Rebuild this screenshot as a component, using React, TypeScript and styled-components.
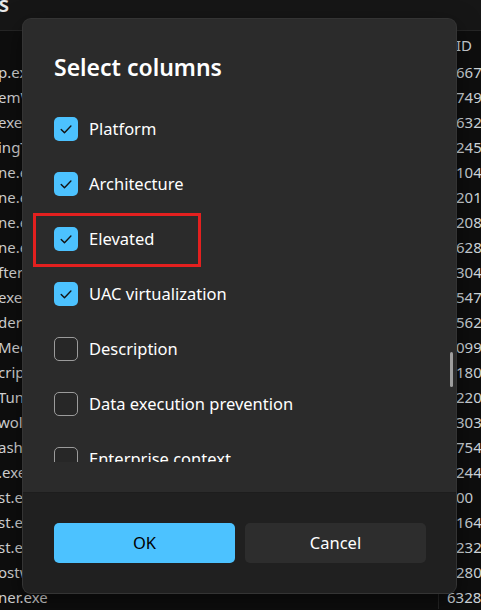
import React from 'react';
import styled, { createGlobalStyle } from 'styled-components';

const GlobalStyle = createGlobalStyle`
  html, body {
    margin: 0;
    padding: 0;
    background: #0e0e0e;
  }
  * {
    box-sizing: border-box;
  }
`;

type Proc = { name: string; id: string; shift?: boolean };

const processes: Proc[] = [
  { name: 'p.exe', id: '6674' },
  { name: 'emWatch', id: '7496' },
  { name: 'exe', id: '6320' },
  { name: 'ingTool', id: '2452' },
  { name: 'ne.exe', id: '1040' },
  { name: 'ne.exe', id: '2012' },
  { name: 'ne.exe', id: '2084' },
  { name: 'ne.exe', id: '6284' },
  { name: 'fterburner', id: '3044' },
  { name: 'exe', id: '5476' },
  { name: 'derService', id: '5624' },
  { name: 'MediaHost', id: '0992' },
  { name: 'criptHost', id: '1804' },
  { name: 'TuneSvc', id: '2206' },
  { name: 'wolfService', id: '3036' },
  { name: 'ashboard', id: '7544' },
  { name: '.exe', id: '2440' },
  { name: 'st.exe', id: '00' },
  { name: 'st.exe', id: '1640' },
  { name: 'st.exe', id: '2320' },
  { name: 'ostwin', id: '2804' },
  { name: 'ner.exe', id: '6328', shift: true },
];

type Column = { label: string; checked: boolean };

const columns: Column[] = [
  { label: 'Platform', checked: true },
  { label: 'Architecture', checked: true },
  { label: 'Elevated', checked: true },
  { label: 'UAC virtualization', checked: true },
  { label: 'Description', checked: false },
  { label: 'Data execution prevention', checked: false },
  { label: 'Enterprise context', checked: false },
];

function CheckMark() {
  return (
    <svg width="24" height="24" viewBox="0 0 24 24">
      <path
        d="M7.2 12.4l3.3 3.3 6.4-6.6"
        fill="none"
        stroke="#141414"
        strokeWidth="1.4"
        strokeLinecap="round"
        strokeLinejoin="round"
      />
    </svg>
  );
}

export default function App() {
  return (
    <Page>
      <GlobalStyle />
      <TopBar>
        <PageTitle>
          <span>Processes</span>
        </PageTitle>
      </TopBar>
      <HeaderRow>
        <NameCell />
        <IdCell>ID</IdCell>
      </HeaderRow>
      {processes.map((p, i) => (
        <ProcRow key={i}>
          <NameCell>{p.name}</NameCell>
          <IdCell $shift={p.shift}>{p.id}</IdCell>
        </ProcRow>
      ))}

      <Dialog>
        <Body>
          <Title>Select columns</Title>
          <List>
            {columns.map(c => (
              <Option key={c.label}>
                <Box $checked={c.checked}>{c.checked && <CheckMark />}</Box>
                <Label>{c.label}</Label>
              </Option>
            ))}
          </List>
          {/* annotation box round the "Elevated" row */}
          <Highlight />
          <ScrollThumb />
        </Body>
        <Footer>
          <Button $primary>OK</Button>
          <Button>Cancel</Button>
        </Footer>
      </Dialog>
    </Page>
  );
}

const Page = styled.div`
  position: relative;
  width: 481px;
  height: 610px;
  overflow: hidden;
  background: #0e0e0e;
  font-family: 'Noto Sans', 'Open Sans', sans-serif;
  color: #d4d4d4;
`;

const TopBar = styled.div`
  display: flex;
  align-items: flex-start;
  height: 31px;
  background: #161616;
  border-bottom: 1px solid #262626;
`;

const PageTitle = styled.div`
  width: 9px;
  display: flex;
  justify-content: flex-end;
  white-space: nowrap;
  margin-top: -10px;
  font-size: 21px;
  font-weight: 600;
  color: #e8e8e8;
`;

const HeaderRow = styled.div`
  display: flex;
  height: 28px;
  align-items: center;
  font-size: 15px;
`;

const ProcRow = styled.div`
  display: flex;
  height: 25px;
  align-items: center;
  font-size: 15px;
`;

const NameCell = styled.div`
  flex: none;
  width: 441px;
  margin-left: -2px;
  white-space: nowrap;
  overflow: hidden;
  border-right: 1px solid #262626;
  height: 100%;
  display: flex;
  align-items: center;
`;

const IdCell = styled.div<{ $shift?: boolean }>`
  flex: none;
  padding-left: ${p => (p.$shift ? 8 : 17)}px;
  white-space: nowrap;
  color: #cfd6dc;
`;

const Dialog = styled.div`
  position: absolute;
  left: 23px;
  top: 19px;
  width: 433px;
  height: 574px;
  display: flex;
  flex-direction: column;
  border-radius: 8px;
  overflow: hidden;
  background: #2b2b2b;
  box-shadow: 0 0 0 1px #343434, 0 8px 24px rgba(0, 0, 0, 0.5);
`;

const Body = styled.div`
  position: relative;
  flex: 1;
  padding: 33px 31px 30px;
  display: flex;
  flex-direction: column;
`;

const Title = styled.div`
  height: 30px;
  line-height: 30px;
  margin-bottom: 19px;
  font-size: 23px;
  font-weight: 600;
  color: #ffffff;
`;

const List = styled.div`
  height: 361px;
  overflow: hidden;
  display: flex;
  flex-direction: column;
`;

const Option = styled.div`
  flex: 0 0 55px;
  display: flex;
  align-items: center;
  gap: 11px;
`;

const Box = styled.div<{ $checked: boolean }>`
  width: 24px;
  height: 24px;
  border-radius: 5px;
  flex: none;
  background: ${p => (p.$checked ? '#4cc2ff' : '#272727')};
  border: ${p => (p.$checked ? 'none' : '1.5px solid #9b9b9b')};
  display: flex;
  align-items: center;
  justify-content: center;
`;

const Label = styled.span`
  font-size: 16.5px;
  color: #ffffff;
`;

const Highlight = styled.div`
  position: absolute;
  left: 10px;
  top: 194px;
  width: 168px;
  height: 54px;
  border: 3px solid #e3201f;
  pointer-events: none;
`;

const ScrollThumb = styled.div`
  position: absolute;
  left: 427px;
  top: 333px;
  width: 3px;
  height: 35px;
  border-radius: 2px;
  background: #9e9e9e;
`;

const Footer = styled.div`
  height: 101px;
  flex: none;
  background: #202020;
  border-top: 1px solid #1d1d1d;
  padding: 30px 30px 0 31px;
  display: grid;
  grid-template-columns: 1fr 1fr;
  gap: 10px;
  align-content: start;
`;

const Button = styled.div<{ $primary?: boolean }>`
  height: 40px;
  border-radius: 5px;
  display: flex;
  align-items: center;
  justify-content: center;
  padding-bottom: 2px;
  font-size: 16.5px;
  background: ${p => (p.$primary ? '#4cc2ff' : '#2d2d2d')};
  color: ${p => (p.$primary ? '#000000' : '#ffffff')};
`;
